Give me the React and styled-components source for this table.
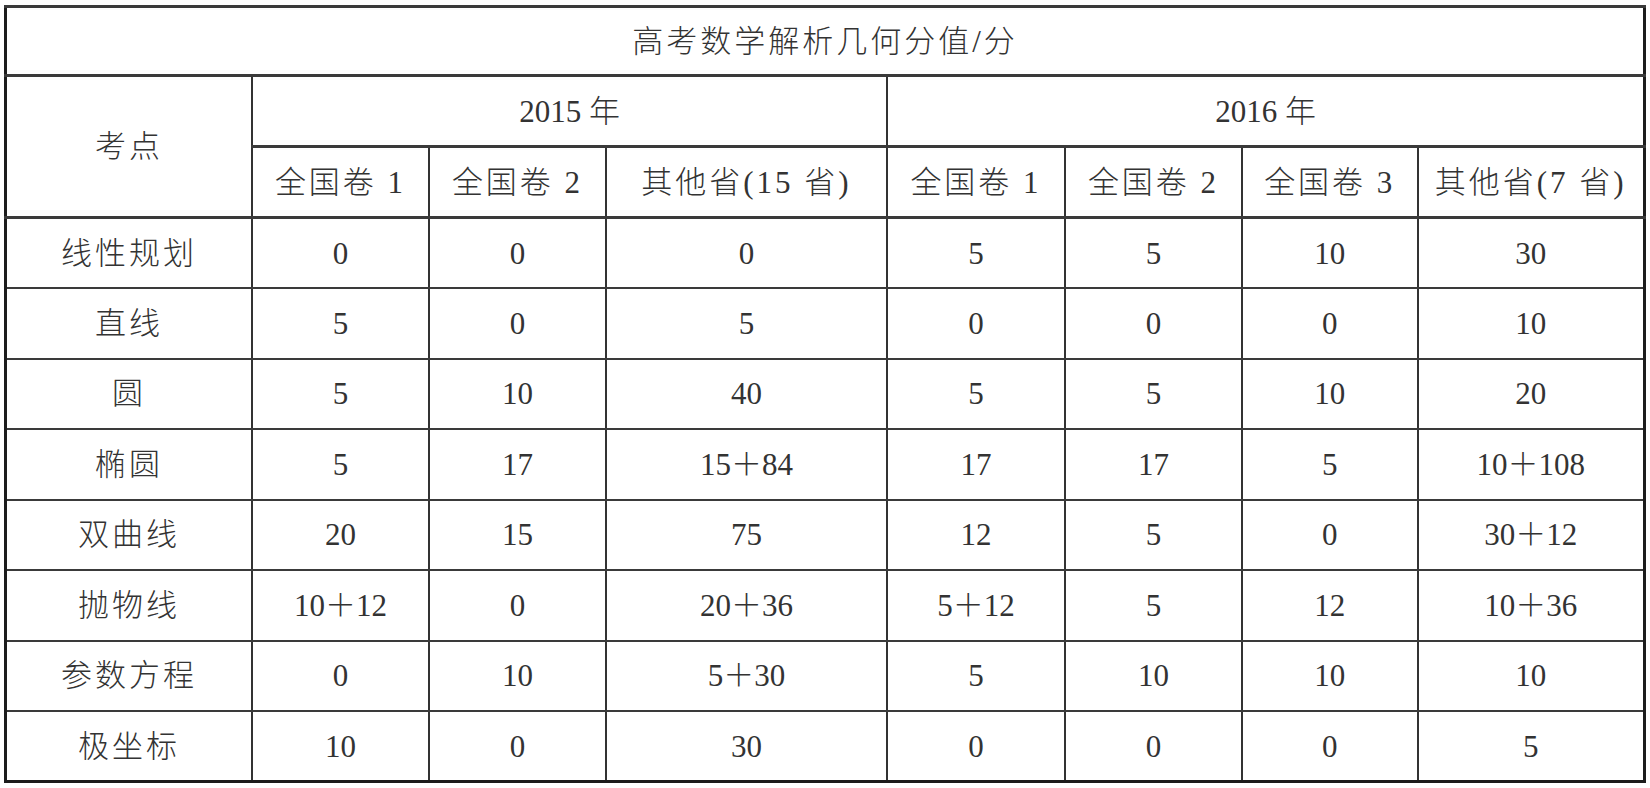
import React from "react"
import styled, { createGlobalStyle } from "styled-components"

const GlobalStyle = createGlobalStyle`
  html, body {
    margin: 0;
    padding: 0;
    background: #fff;
  }
`

const Page = styled.div`
  padding: 5px 4px 0 4px;
  font-family: "Liberation Serif", "Noto Sans CJK SC", serif;
  color: #333;
`

const Table = styled.table`
  width: 1642px;
  table-layout: fixed;
  border-collapse: collapse;
  border: 3px solid #1c1c1c;
`

const Col = styled.col`
  width: ${p => p.w}px;
`

const Row = styled.tr`
  height: ${p => p.h || 70.5}px;
`

const Cell = styled.td`
  padding: 0;
  text-align: center;
  vertical-align: middle;
  font-size: 31px;
  font-weight: 300;
  line-height: 1;
  letter-spacing: ${p => (p.num ? 0 : 3)}px;
  border-left: 2px solid #333;
  border-right: 2px solid #333;
  border-top: ${p => (p.strong ? 3 : 2)}px solid #3a3a3a;
  border-bottom: ${p => (p.strong ? 3 : 2)}px solid #3a3a3a;
  white-space: nowrap;
`

const widths = [246.5, 177, 177, 281, 178, 177, 175.5, 227]

const subHeads = ["全国卷 1", "全国卷 2", "其他省(15 省)", "全国卷 1", "全国卷 2", "全国卷 3", "其他省(7 省)"]

const rows = [
  ["线性规划", "0", "0", "0", "5", "5", "10", "30"],
  ["直线", "5", "0", "5", "0", "0", "0", "10"],
  ["圆", "5", "10", "40", "5", "5", "10", "20"],
  ["椭圆", "5", "17", "15＋84", "17", "17", "5", "10＋108"],
  ["双曲线", "20", "15", "75", "12", "5", "0", "30＋12"],
  ["抛物线", "10＋12", "0", "20＋36", "5＋12", "5", "12", "10＋36"],
  ["参数方程", "0", "10", "5＋30", "5", "10", "10", "10"],
  ["极坐标", "10", "0", "30", "0", "0", "0", "5"],
]

export default function App() {
  return (
    <Page>
      <GlobalStyle />
      <Table>
        <colgroup>
          {widths.map((w, i) => (
            <Col key={i} w={w} />
          ))}
        </colgroup>
        <tbody>
          <Row h={69}>
            <Cell colSpan={8} strong>高考数学解析几何分值/分</Cell>
          </Row>
          <Row h={71}>
            <Cell rowSpan={2} strong>考点</Cell>
            <Cell colSpan={3} num>2015 年</Cell>
            <Cell colSpan={4} num>2016 年</Cell>
          </Row>
          <Row h={71}>
            {subHeads.map((t, i) => (
              <Cell key={i} strong>{t}</Cell>
            ))}
          </Row>
          {rows.map((r, i) => (
            <Row key={i}>
              {r.map((v, j) => (
                <Cell key={j} num={j > 0}>{v}</Cell>
              ))}
            </Row>
          ))}
        </tbody>
      </Table>
    </Page>
  )
}
